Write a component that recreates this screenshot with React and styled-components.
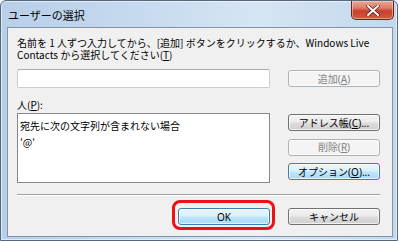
import styled, { createGlobalStyle } from "styled-components";

const GlobalStyle = createGlobalStyle`
  html, body {
    margin: 0;
    padding: 0;
    background: #ffffff;
  }
  body {
    font-family: "Noto Sans", "Noto Sans CJK JP", sans-serif;
    font-size: 10px;
    color: #000000;
  }
`;

export default function App() {
  return (
    <>
      <GlobalStyle />
      <Window>
        <TitleBar>
          <Title>ユーザーの選択</Title>
          <CloseButton aria-label="close">
            <svg width="14" height="11" viewBox="0 0 14 11">
              <path
                d="M2 1 L12 10 M12 1 L2 10"
                stroke="#5a1a12"
                strokeWidth="3.4"
                strokeLinecap="round"
              />
              <path
                d="M2 1 L12 10 M12 1 L2 10"
                stroke="#ffffff"
                strokeWidth="2"
                strokeLinecap="round"
              />
            </svg>
          </CloseButton>
        </TitleBar>
        <Client>
          <Grid>
            <Instructions>
              <Line>名前を 1 人ずつ入力してから、[追加] ボタンをクリックするか、Windows Live</Line>
              <Line>
                Contacts から選択してください(<U>T</U>)
              </Line>
            </Instructions>
            <TextInput />
            <Button variant="disabled" $center>
              追加(<U>A</U>)
            </Button>
            <Label>
              人(<U>P</U>):
            </Label>
            <ListBox>
              <ListLine>宛先に次の文字列が含まれない場合</ListLine>
              <ListLine>'@'</ListLine>
            </ListBox>
            <ButtonStack>
              <Button>
                アドレス帳(<U>C</U>)...
              </Button>
              <Button variant="disabled">
                削除(<U>R</U>)
              </Button>
              <Button variant="blue">
                オプション(<U>O</U>)...
              </Button>
            </ButtonStack>
          </Grid>
          <Separator />
          <Footer>
            <Highlight>
              <Button variant="blue">OK</Button>
            </Highlight>
            <Button>キャンセル</Button>
          </Footer>
        </Client>
      </Window>
    </>
  );
}

const Window = styled.div`
  box-sizing: border-box;
  width: 398px;
  height: 241px;
  display: flex;
  flex-direction: column;
  border: 1px solid #56687e;
  border-radius: 6px 6px 0 0;
  padding: 0 4px 3px 6px;
  background: linear-gradient(
    90deg,
    #b8cfe8 0%,
    #c6daef 35%,
    #d6e5f4 65%,
    #c3d7ed 100%
  );
  box-shadow: inset 0 0 0 1px rgba(255, 255, 255, 0.55);
`;

const TitleBar = styled.div`
  height: 26px;
  display: flex;
  justify-content: space-between;
  align-items: flex-start;
`;

const Title = styled.div`
  font-family: "Noto Sans CJK JP", sans-serif;
  font-size: 11px;
  line-height: 14px;
  margin-top: 7px;
  margin-left: 1px;
  color: #000000;
`;

const CloseButton = styled.div`
  box-sizing: border-box;
  width: 43px;
  height: 19px;
  margin-right: -1px;
  display: flex;
  align-items: center;
  justify-content: center;
  border: 1px solid #6b2217;
  border-top: none;
  border-radius: 0 0 5px 5px;
  background: linear-gradient(
    180deg,
    #e9a996 0%,
    #dc7a66 40%,
    #c7402c 55%,
    #d25a3c 100%
  );
  box-shadow: inset 0 0 0 1px rgba(255, 220, 210, 0.5);
`;

const Client = styled.div`
  flex: 1;
  display: flex;
  flex-direction: column;
  border: 1px solid #8094ab;
  background: #f0f0f0;
  padding: 9px 12px 0 9px;
`;

const Grid = styled.div`
  display: grid;
  grid-template-columns: 253px 92px;
  column-gap: 18px;
  align-items: start;
`;

const Instructions = styled.div`
  grid-column: 1 / -1;
  margin-bottom: 9px;
`;

const Line = styled.div`
  font-family: "Noto Sans CJK JP", sans-serif;
  line-height: 11.5px;
  height: 11.5px;
  white-space: nowrap;
`;

const U = styled.span`
  text-decoration: underline;
  text-underline-offset: 1px;
`;

const TextInput = styled.div`
  box-sizing: border-box;
  height: 19px;
  background: #ffffff;
  border: 1px solid #c5cdd6;
  border-top-color: #abadb3;
  border-radius: 2px;
`;

const Label = styled.div`
  grid-column: 1 / -1;
  font-family: "Noto Sans CJK JP", sans-serif;
  line-height: 12px;
  margin-top: 11px;
  margin-bottom: 2px;
`;

const ListBox = styled.div`
  box-sizing: border-box;
  height: 70px;
  background: #ffffff;
  border: 1px solid #828790;
  padding: 4px 2px;
`;

const ListLine = styled.div`
  font-family: "Noto Sans CJK JP", sans-serif;
  line-height: 16px;
`;

const ButtonStack = styled.div`
  display: flex;
  flex-direction: column;
  gap: 7.5px;
  margin-top: 1px;
`;

const buttonColors = {
  normal: {
    border: "#707070",
    color: "#000000",
    bg: "linear-gradient(180deg, #f3f3f3 0%, #ebebeb 48%, #dddddd 52%, #cfcfcf 100%)",
  },
  blue: {
    border: "#3c7fb1",
    color: "#000000",
    bg: "linear-gradient(180deg, #eaf6fd 0%, #d9f0fc 48%, #bee6fd 52%, #a7d9f5 100%)",
  },
  disabled: {
    border: "#adb2b5",
    color: "#838383",
    bg: "#f4f4f4",
  },
};

const Button = styled.div`
  box-sizing: border-box;
  width: 92px;
  height: 17px;
  display: flex;
  align-items: center;
  justify-content: center;
  align-self: ${({ $center }) => ($center ? "center" : "auto")};
  font-family: "Noto Sans", "Noto Sans CJK JP", sans-serif;
  font-size: 10px;
  line-height: 12px;
  border-radius: 3px;
  border: 1px solid ${({ variant }) => buttonColors[variant || "normal"].border};
  color: ${({ variant }) => buttonColors[variant || "normal"].color};
  background: ${({ variant }) => buttonColors[variant || "normal"].bg};
  box-shadow: inset 0 0 0 1px rgba(255, 255, 255, 0.7);
`;

const Separator = styled.div`
  height: 1px;
  margin-top: 11px;
  background: #a0a0a0;
  border-bottom: 1px solid #ffffff;
`;

const Footer = styled.div`
  display: flex;
  justify-content: flex-end;
  gap: 18px;
  margin-top: 12px;
`;

const Highlight = styled.div`
  position: relative;

  &::after {
    content: "";
    position: absolute;
    top: -8px;
    left: -6px;
    right: -5px;
    bottom: -5px;
    border: 3px solid #ee1111;
    border-radius: 8px;
    pointer-events: none;
  }
`;
